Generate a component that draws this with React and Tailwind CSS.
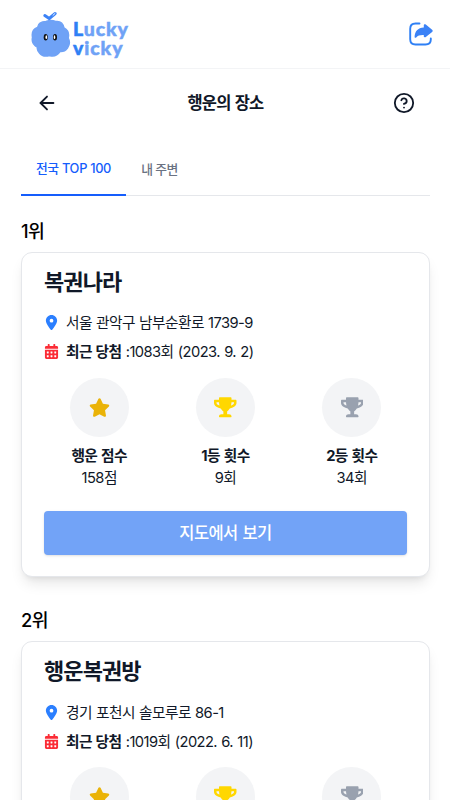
import React from 'react';
import { FaLocationDot } from 'react-icons/fa6';
import { FaCalendarAlt, FaStar, FaTrophy } from 'react-icons/fa';
import { ArrowLeft, CircleHelp } from 'lucide-react';

const shops = [
  {
    rank: 1,
    name: '복권나라',
    address: '서울 관악구 남부순환로 1739-9',
    recent: '1083회 (2023. 9. 2)',
    score: 158,
    first: 9,
    second: 34,
  },
  {
    rank: 2,
    name: '행운복권방',
    address: '경기 포천시 솔모루로 86-1',
    recent: '1019회 (2022. 6. 11)',
  },
];

const Logo = () => (
  <div className="flex items-center">
    <svg width="40" height="48" viewBox="0 0 40 48">
      <path d="M15 11.500Q20 9.500 24.500 11.500Q31.500 10.500 33 18Q39 21 37.200 28Q40 33 36.500 38Q33.500 42 29 41.500Q25 47.500 18.500 45.500Q12 47.500 8.500 43Q5.500 39.500 6.500 37.500Q0 34 1.500 27.500Q0 20 6.500 17.500Q7.500 11.500 15 11.500z" fill="#6fa2f6" stroke="#6fa2f6" strokeWidth="1.400" strokeLinejoin="round" />
      <path d="M13.800 5.500l4.400 3 6-5" fill="none" stroke="#3b82f6" strokeWidth="3" strokeLinecap="round" strokeLinejoin="round" />
      <path d="M22 5.300l2-1.800" stroke="#fff" strokeWidth=".9" strokeLinecap="round" />
      <ellipse cx="14.700" cy="27.200" rx="2" ry="3.300" fill="#111" />
      <ellipse cx="24" cy="27.200" rx="2" ry="3.300" fill="#111" />
      <ellipse cx="15.300" cy="27.200" rx=".8" ry="1.900" fill="#fff" />
      <ellipse cx="23.500" cy="27.200" rx=".8" ry="1.900" fill="#fff" />
    </svg>
    <div className="ml-[2px] mt-[7px] flex flex-col font-[Lato,sans-serif] text-[19.500px] font-black leading-[19px] tracking-[0.900px] text-[#6fa2f6] [-webkit-text-stroke:0.500px]">
      <span><span className="text-[#2f80f5]">L</span>ucky</span>
      <span><span className="text-[#2f80f5]">v</span>icky</span>
    </div>
  </div>
);

const ShareIcon = () => (
  <svg width="24" height="24" viewBox="0 0 24 24">
    <path d="M10.500 1.500H6.500Q1.200 1.500 1.200 6.800v10.400Q1.200 22.500 6.500 22.500h10Q21.800 22.500 21.800 17.500v-1" fill="none" stroke="#2f80f5" strokeWidth="1.900" strokeLinecap="round" />
    <path d="M14.800 3.300c0-1.200 1.100-1.500 2-.8l6.300 5.200c.8.700.8 1.500 0 2.200l-6.300 5.200c-.9.700-2 .4-2-.8v-1.300c-3.700-.2-5.800.5-7.600 2.400-.7.700-1.700.4-1.600-.6C5.800 9.300 8.800 5.700 14.800 5.400z" fill="#3b82f6" />
  </svg>
);

const Stat = ({ icon, label, value }) => (
  <div className="flex flex-1 flex-col items-center">
    <div className="flex h-[59px] w-[59px] items-center justify-center rounded-full bg-gray-100">
      {icon}
    </div>
    <p className="mt-[8px] text-[14.700px] font-bold leading-[22px] tracking-[-0.600px] [word-spacing:1px]">{label}</p>
    <p className="text-[14.700px] leading-[22px] tracking-[-0.500px]">{value}</p>
  </div>
);

const ShopCard = ({ shop }) => (
  <section className="mb-[30px]">
    <h2 className="mb-[8px] text-[18.300px] font-medium leading-[26px] tracking-[-0.600px] text-black">{shop.rank}위</h2>
    <div className="h-[325.700px] rounded-[11px] border border-gray-200 bg-white px-[22px] pt-[14px] shadow-[0_9px_14px_-3px_rgba(0,0,0,0.1),0_4px_6px_-4px_rgba(0,0,0,0.1)]">
      <h3 className="text-[22px] font-bold leading-[30px] tracking-[-0.900px]">{shop.name}</h3>
      <div className="mt-[15px] flex h-[22px] items-center text-[14.700px]">
        <FaLocationDot size={15} className="mr-[7px] text-blue-500" />
        <span className="whitespace-nowrap pt-[2px] tracking-[-0.540px] [word-spacing:0.500px]">{shop.address}</span>
      </div>
      <div className="mt-[7px] flex h-[22px] items-center text-[14.700px]">
        <FaCalendarAlt size={15} className="mr-[7px] text-red-500" />
        <span className="whitespace-nowrap pt-[2px] tracking-[-0.580px] [word-spacing:0.800px]">
          <strong>최근 당첨</strong> :{shop.recent}
        </span>
      </div>
      <div className="-mx-[8px] mt-[15px] flex">
        <Stat icon={<FaStar size={21} className="text-[#eab308]" />} label="행운 점수" value={shop.score && `${shop.score}점`} />
        <Stat icon={<FaTrophy size={22.5} className="text-[#ffd700]" />} label="1등 횟수" value={shop.first && `${shop.first}회`} />
        <Stat icon={<FaTrophy size={22.5} className="text-gray-400" />} label="2등 횟수" value={shop.second && `${shop.second}회`} />
      </div>
      <button className="mt-[22px] h-[44px] w-full rounded-[4px] bg-[#72a3f7] pt-[2px] text-[16.500px] font-medium tracking-[-0.600px] text-white shadow-sm [word-spacing:1px]">
        지도에서 보기
      </button>
    </div>
  </section>
);

const App = () => {
  return (
    <div className="h-[800px] overflow-hidden bg-white font-[Inter,'Noto_Sans_CJK_KR',sans-serif] text-gray-900">
      <header className="flex h-[69px] items-center justify-between border-b border-gray-100 pl-[31px] pr-[17px]">
        <Logo />
        <ShareIcon />
      </header>
      <div className="flex h-[68px] items-center justify-between pl-[36px] pr-[35px]">
        <ArrowLeft size={22} strokeWidth={2} />
        <h1 className="text-[16.500px] font-bold tracking-[-0.800px] [word-spacing:1px]">행운의 장소</h1>
        <CircleHelp size={22} strokeWidth={2} />
      </div>
      <main className="pl-[21px] pr-[20px]">
        <nav className="mt-[7px] flex h-[52px] border-b border-gray-200 text-[12.800px] font-medium tracking-[-0.300px]">
          <button className="-mb-px w-[105px] shrink-0 border-b-2 border-blue-600 text-blue-600">전국 TOP 100</button>
          <button className="w-[67px] tracking-[-0.500px] text-gray-500">내 주변</button>
        </nav>
        <div className="pt-[21.500px]">
          {shops.map((shop) => (
            <ShopCard key={shop.rank} shop={shop} />
          ))}
        </div>
      </main>
    </div>
  );
};

export default App;
